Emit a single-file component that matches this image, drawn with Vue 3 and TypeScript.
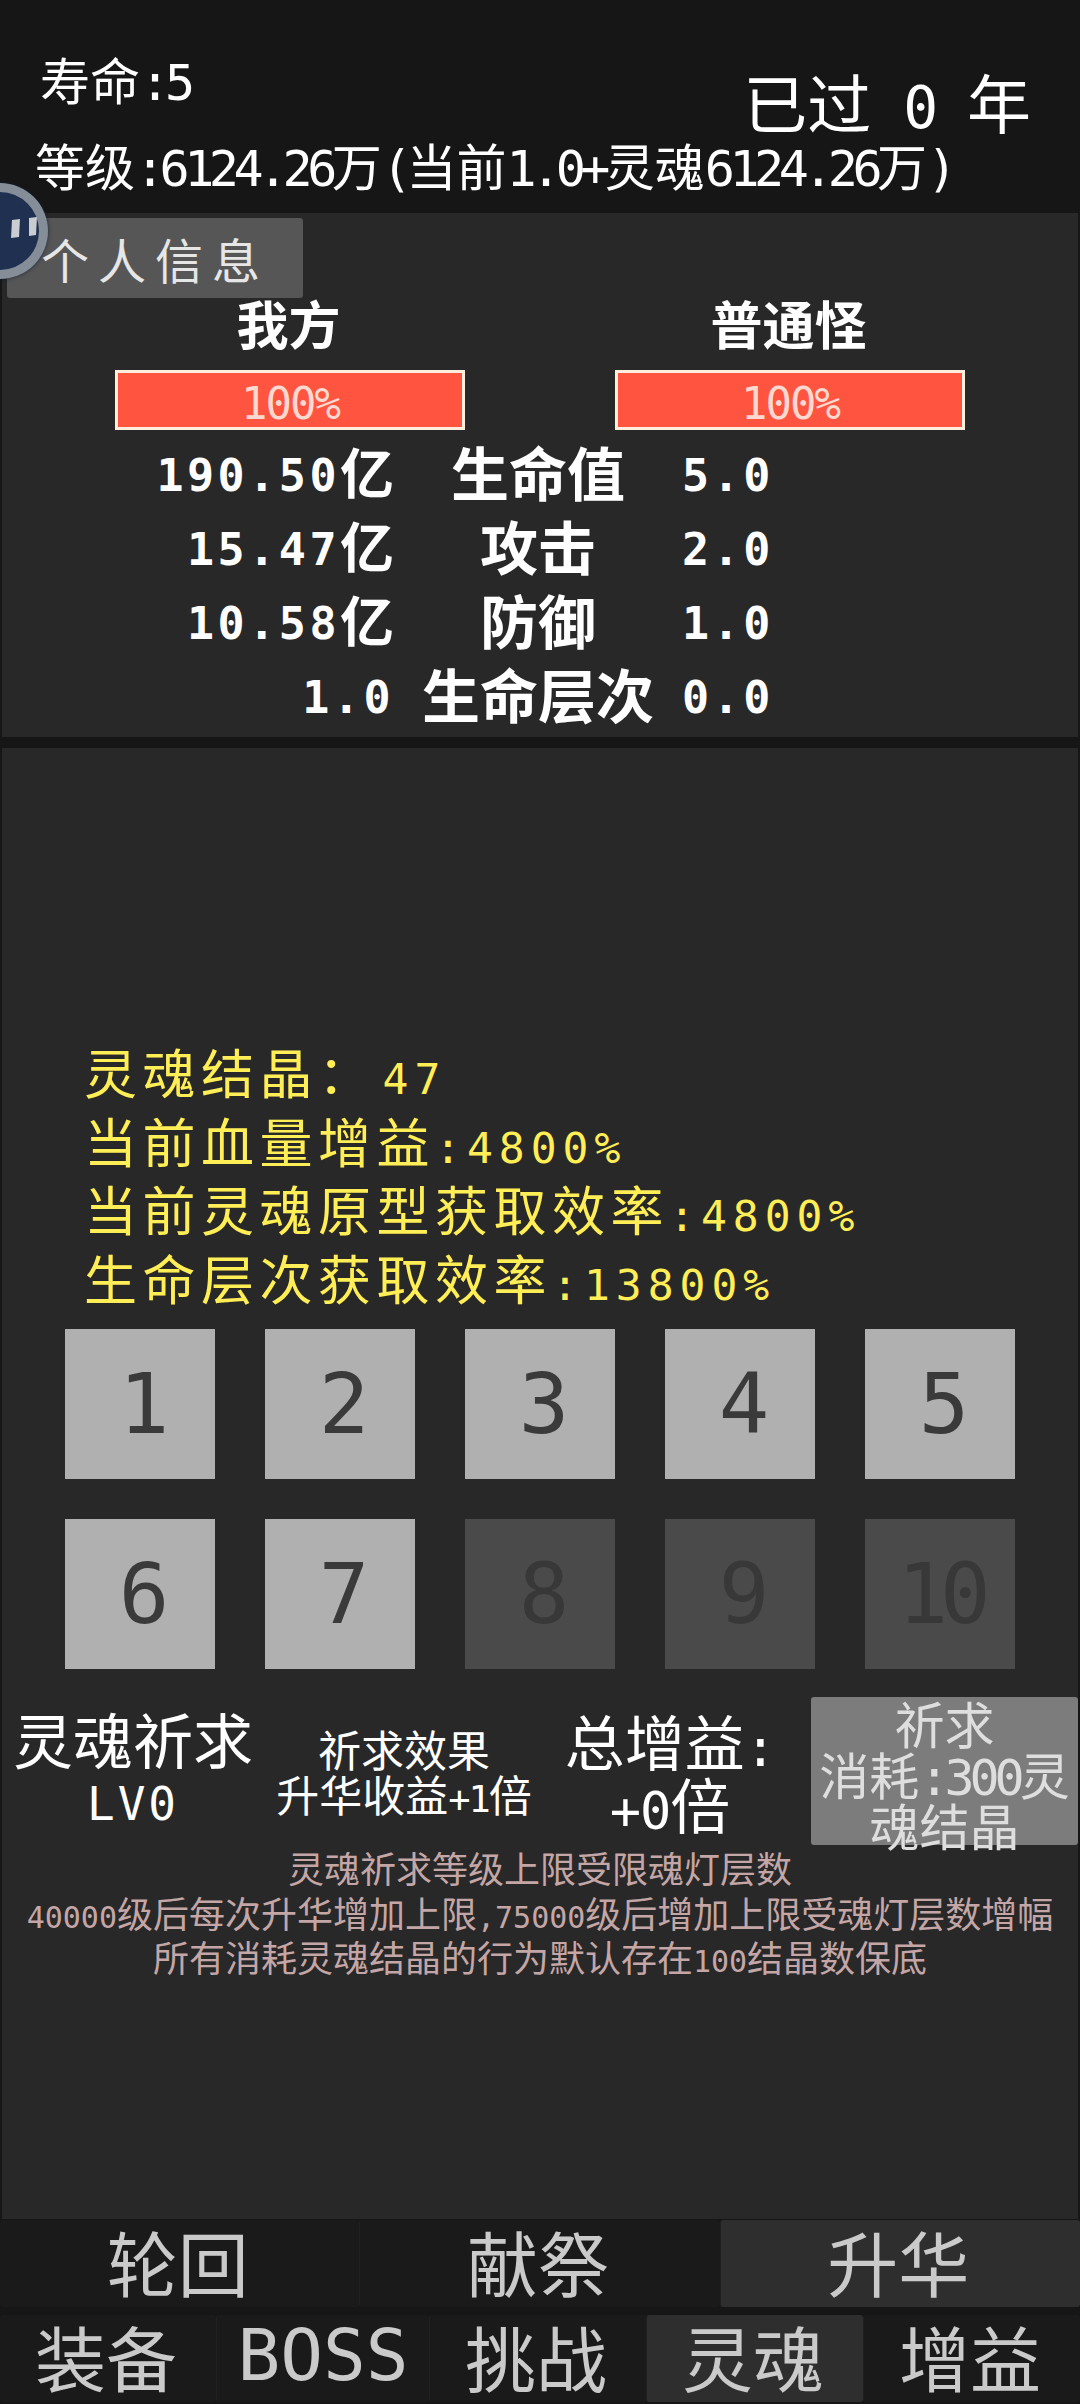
<script setup lang="ts">
interface Stat {
  mine: string;
  unit: string;
  label: string;
  enemy: string;
}

const stats: Stat[] = [
  { mine: "190.50", unit: "亿", label: "生命值", enemy: "5.0" },
  { mine: "15.47", unit: "亿", label: "攻击", enemy: "2.0" },
  { mine: "10.58", unit: "亿", label: "防御", enemy: "1.0" },
  { mine: "1.0", unit: "", label: "生命层次", enemy: "0.0" },
];

const prayers = [1, 2, 3, 4, 5, 6, 7, 8, 9, 10];
const unlocked = 7;

const topTabs = ["轮回", "献祭", "升华"];
const bottomTabs = ["装备", "BOSS", "挑战", "灵魂", "增益"];
</script>

<template>
  <div class="page">
    <header class="head">
      <div class="head-top">
        <div class="life">寿命<span class="n">:5</span></div>
        <div class="years">已过<span class="n"> 0 </span>年</div>
      </div>
      <div class="level">等级<span class="n">:6124.26</span>万<span class="n">(</span>当前<span class="n">1.0+</span>灵魂<span class="n">6124.26</span>万<span class="n">)</span></div>
    </header>

    <section class="panel info">
      <button class="info-tab">个人信息</button>
      <div class="sides">
        <div class="side">
          <div class="side-name">我方</div>
          <div class="bar"><span class="n">100%</span></div>
        </div>
        <div class="side">
          <div class="side-name">普通怪</div>
          <div class="bar"><span class="n">100%</span></div>
        </div>
      </div>
      <div class="stats">
        <div v-for="s in stats" :key="s.label" class="stat">
          <div class="stat-mine"><span class="n">{{ s.mine }}</span>{{ s.unit }}</div>
          <div class="stat-label">{{ s.label }}</div>
          <div class="stat-enemy"><span class="n">{{ s.enemy }}</span></div>
        </div>
      </div>
    </section>

    <section class="panel soul">
      <div class="yellow">
        <div>灵魂结晶：<span class="n gap">47</span></div>
        <div>当前血量增益<span class="n">:4800%</span></div>
        <div>当前灵魂原型获取效率<span class="n">:4800%</span></div>
        <div>生命层次获取效率<span class="n">:13800%</span></div>
      </div>

      <div class="prayers">
        <div
          v-for="p in prayers"
          :key="p"
          class="prayer"
          :class="{ locked: p > unlocked }"
        >
          {{ p }}
        </div>
      </div>

      <div class="pray-row">
        <div class="pray-a">
          <div>灵魂祈求</div>
          <div class="n">LV0</div>
        </div>
        <div class="pray-b">
          <div>祈求效果</div>
          <div>升华收益<span class="n">+1</span>倍</div>
        </div>
        <div class="pray-c">
          <div>总增益<span class="n">:</span></div>
          <div><span class="n">+0</span>倍</div>
        </div>
        <button class="pray-btn">祈求<br />消耗<span class="n">:300</span>灵<br />魂结晶</button>
      </div>

      <div class="notes">
        <div>灵魂祈求等级上限受限魂灯层数</div>
        <div><span class="n">40000</span>级后每次升华增加上限<span class="n">,75000</span>级后增加上限受魂灯层数增幅</div>
        <div>所有消耗灵魂结晶的行为默认存在<span class="n">100</span>结晶数保底</div>
      </div>
    </section>

    <nav class="tabs top">
      <div v-for="t in topTabs" :key="t" class="tab" :class="{ active: t === '升华' }">{{ t }}</div>
    </nav>
    <nav class="tabs bottom">
      <div v-for="t in bottomTabs" :key="t" class="tab" :class="{ active: t === '灵魂', latin: t === 'BOSS' }">{{ t }}</div>
    </nav>

    <!-- floating pause bubble, half off the left edge -->
    <div class="bubble">
      <svg width="40" height="24" viewBox="0 0 40 24">
        <path d="M3 4 L11 3 L10 21 L2 22 Z" fill="#c9ccd0" />
        <path d="M20 2 L28 1 L27 19 L20 20 Z" fill="#c9ccd0" />
      </svg>
    </div>
  </div>
</template>

<style>
html,
body {
  margin: 0;
  background: #161616;
}
</style>

<style scoped>
.page {
  position: relative;
  width: 1080px;
  height: 2404px;
  overflow: hidden;
  display: flex;
  flex-direction: column;
  background: #161616;
  color: #fff;
  font-family: "Noto Sans CJK SC", "Noto Sans", sans-serif;
}
.n {
  font-family: "DejaVu Sans Mono", "Noto Sans CJK SC", monospace;
  letter-spacing: -0.1em;
  line-height: 0;
}

.head {
  height: 213px;
  flex: none;
  box-sizing: border-box;
  padding: 48px 49px 0 35px;
}
.head-top {
  display: flex;
  justify-content: space-between;
}
.life {
  font-size: 50px;
  line-height: 60px;
  margin-left: 5px;
}
.years {
  font-size: 64px;
  line-height: 76px;
  margin-top: 14px;
  white-space: pre;
}
.years .n {
  font-size: 58px;
  letter-spacing: -3px;
}
.level {
  font-size: 50px;
  line-height: 60px;
  margin-top: -4px;
  white-space: nowrap;
}
.level .n {
  letter-spacing: -5.5px;
}

.panel {
  margin: 0 2px;
  background: #282828;
  flex: none;
}
.info {
  height: 524px;
  box-sizing: border-box;
  padding-top: 5px;
}
.info-tab {
  display: block;
  width: 296px;
  height: 80px;
  margin-left: 5px;
  padding: 0;
  border: 0;
  border-radius: 3px;
  background: #565656;
  color: #e6e6e6;
  font-family: inherit;
  font-size: 48px;
  letter-spacing: 9px;
}
.sides {
  display: flex;
  gap: 150px;
  margin-left: 113px;
}
.side {
  width: 350px;
  text-align: center;
}
.side-name {
  padding-right: 3px;
  font-size: 52px;
  font-weight: 700;
  line-height: 62px;
  margin-top: -6px;
}
.bar {
  box-sizing: border-box;
  height: 60px;
  margin-top: 16px;
  border: 3px solid #ffeedd;
  background: #ff5540;
  color: #ffd9cf;
  font-size: 44px;
  line-height: 54px;
}
.bar .n {
  letter-spacing: -2px;
}
.stats {
  margin-top: 4px;
}
.stat {
  display: grid;
  grid-template-columns: 392px 288px 1fr;
  height: 74px;
  font-size: 54px;
  line-height: 74px;
  font-weight: 700;
  white-space: nowrap;
}
.stat .n {
  font-size: 45px;
  letter-spacing: 3.5px;
  vertical-align: 3px;
}
.stat-mine {
  text-align: right;
}
.stat-label {
  font-size: 58px;
  text-align: center;
}

.soul {
  margin-top: 11px;
  height: 1471px;
  box-sizing: border-box;
  padding-top: 289px;
}
.yellow {
  margin-left: 82px;
  color: #ffee55;
  font-size: 53px;
  line-height: 68.5px;
  letter-spacing: 5.5px;
  white-space: nowrap;
}
.yellow .n {
  font-size: 43px;
  letter-spacing: 6px;
}
.yellow .gap {
  margin-left: 6px;
}
.prayers {
  display: grid;
  grid-template-columns: repeat(5, 150px);
  grid-auto-rows: 150px;
  gap: 40px 50px;
  margin: 18px 0 0 63px;
}
.prayer {
  display: flex;
  align-items: center;
  justify-content: center;
  background: #b0b0b0;
  color: #3a3a3a;
  font-family: "DejaVu Sans Mono", monospace;
  font-size: 84px;
  letter-spacing: -8px;
}
.prayer.locked {
  background: #4a4a4a;
  color: #383838;
}

.pray-row {
  display: grid;
  grid-template-columns: 262px 280px 252px 1fr;
  align-items: center;
  height: 148px;
  margin-top: 28px;
  text-align: center;
  white-space: nowrap;
}
.pray-a {
  font-size: 60px;
  line-height: 66px;
}
.pray-a .n {
  font-size: 46px;
  line-height: 66px;
  letter-spacing: 3px;
}
.pray-b {
  font-size: 43px;
  line-height: 45px;
}
.pray-b .n {
  font-size: 37px;
  letter-spacing: -2px;
}
.pray-c {
  font-size: 60px;
  line-height: 63px;
}
.pray-c .n {
  font-size: 52px;
  letter-spacing: -1px;
}
.pray-btn {
  height: 148px;
  margin-left: 15px;
  padding: 0;
  border: 0;
  border-radius: 3px;
  background: #7c7c7c;
  color: #dedede;
  font-family: inherit;
  font-size: 50px;
  line-height: 51px;
  white-space: nowrap;
}
.notes {
  color: #c4a6a6;
  font-size: 36px;
  line-height: 44.5px;
  text-align: center;
  white-space: nowrap;
}
.notes .n {
  font-size: 30px;
  letter-spacing: 0;
}

.tabs {
  display: flex;
  height: 87px;
  flex: none;
  color: #cacaca;
  font-size: 71px;
  line-height: 81px;
  text-align: center;
}
.top {
  margin-top: 1px;
}
.bottom {
  margin-top: 8px;
}
.tab {
  box-sizing: border-box;
  flex: 1;
  padding-right: 4px;
  background: #1a1a1a;
  border-radius: 3px;
}
.tab + .tab {
  border-left: 1px solid #202020;
}
.tab.active {
  background: #2e2e2e;
}
.tab.latin {
  padding-right: 0;
  font-family: "DejaVu Sans Mono", monospace;
}

.bubble {
  position: absolute;
  left: -48px;
  top: 183px;
  box-sizing: border-box;
  width: 96px;
  height: 96px;
  border: 9px solid rgba(150, 158, 165, 0.85);
  border-radius: 50%;
  background: #1f3050;
  box-shadow: 0 0 4px rgba(20, 30, 50, 0.8);
}
.bubble svg {
  position: absolute;
  left: 48px;
  top: 24px;
}
</style>
